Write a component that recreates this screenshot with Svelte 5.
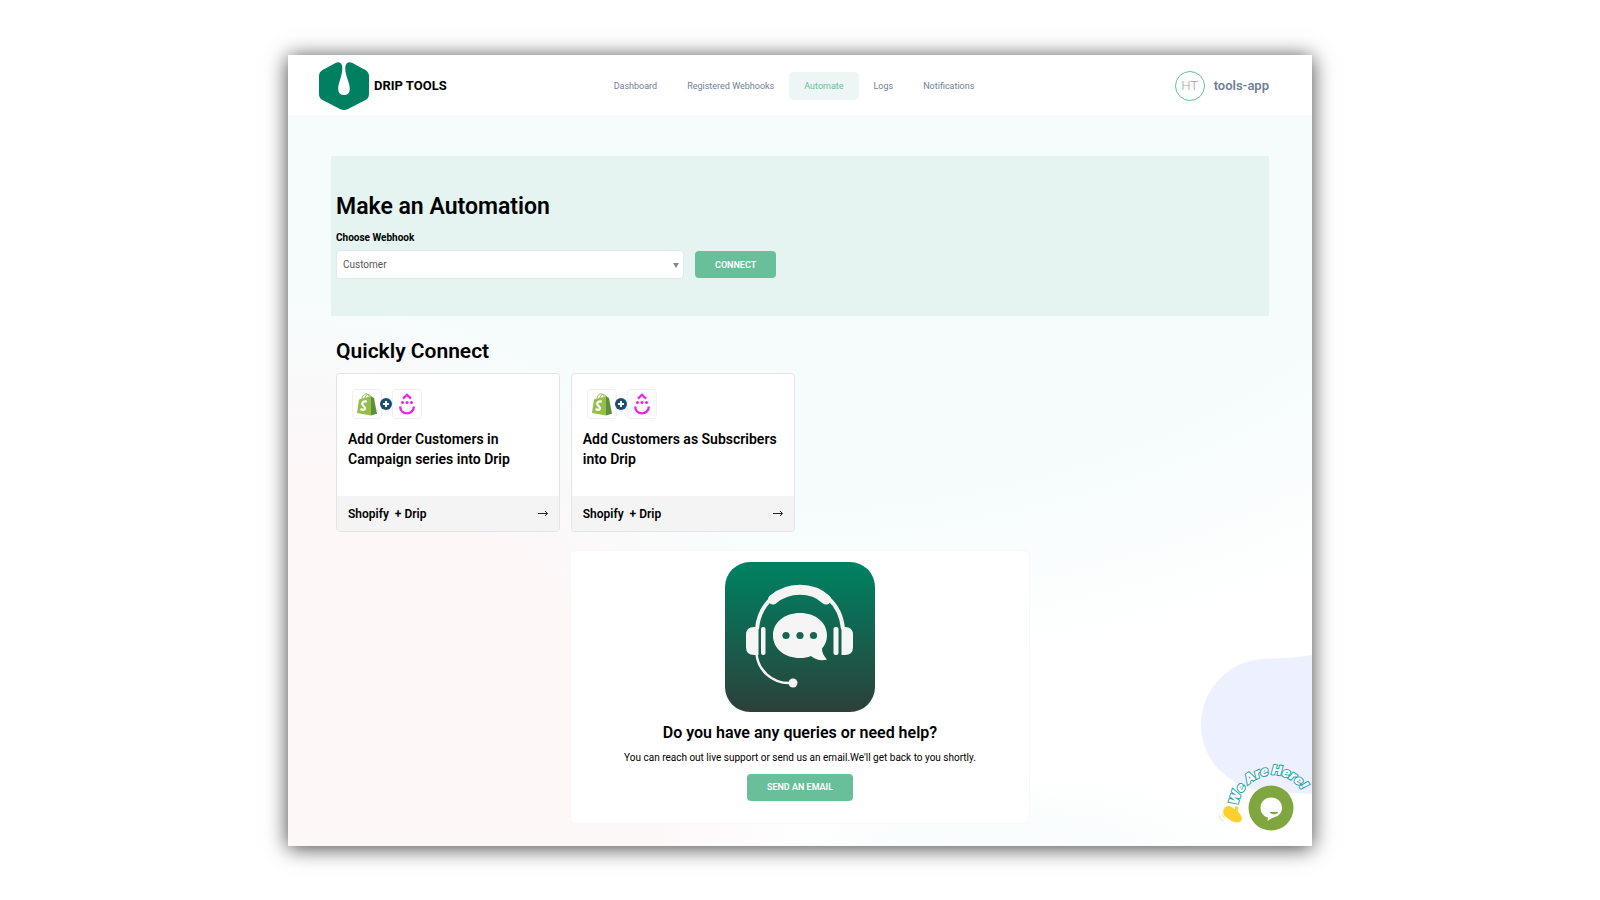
<script lang="ts">
	const links = ['Dashboard', 'Registered Webhooks', 'Automate', 'Logs', 'Notifications'];
	const active = 'Automate';

	const webhooks = ['Customer', 'Order', 'Checkout', 'Product'];
	let webhook = $state('Customer');

	const recipes = [
		{ title: 'Add Order Customers in Campaign series into Drip', from: 'Shopify', to: 'Drip' },
		{ title: 'Add Customers as Subscribers into Drip', from: 'Shopify', to: 'Drip' }
	];
</script>

<div class="window">
	<header>
		<a class="brand" href="#home">
			<svg width="50" height="48" viewBox="0 0 50 48" aria-hidden="true">
				<path
					fill="#008060"
					d="M16 1.2 Q19.5 -.8 22 1.6 Q23.4 3 23.3 6 C23.3 15 19.2 20 19.2 27 Q19.5 33 25 33 Q30.5 33 30.8 27 C30.8 20 26.4 15 26.2 6 Q26.2 3 27.6 1.4 Q30.2 -.8 33.5 1 L46 7.8 Q50 10 50 14 L50 32 Q50 36 46.5 38 L29 47 Q25 49 21 47 L3.5 38 Q0 36 0 32 L0 14 Q0 10 3.5 8 Z"
				/>
			</svg>
			<span>DRIP TOOLS</span>
		</a>

		<nav>
			{#each links as link}
				<a href="#{link.toLowerCase().replace(' ', '-')}" class:active={link === active}>{link}</a>
			{/each}
		</nav>

		<div class="account">
			<span class="avatar">HT</span>
			<span class="name">tools-app</span>
		</div>
	</header>

	<main>
		<section class="automation">
			<h1>Make an Automation</h1>
			<label for="webhook">Choose Webhook</label>
			<div class="row">
				<div class="select">
					<select id="webhook" bind:value={webhook}>
						{#each webhooks as option}
							<option>{option}</option>
						{/each}
					</select>
					<svg width="6" height="5" viewBox="0 0 6 5" aria-hidden="true">
						<path d="M0 0H6L3 5Z" fill="#888" />
					</svg>
				</div>
				<button class="btn">CONNECT</button>
			</div>
		</section>

		<section class="quick">
			<h2>Quickly Connect</h2>
			<div class="cards">
				{#each recipes as recipe}
					<a class="card" href="#connect">
						<div class="card-body">
							<div class="apps">
								<span class="app">
									<svg width="20" height="23" viewBox="0 0 20 23" aria-hidden="true">
										<path d="M5 6C5 2.5 7.5 .8 9.3 .8C11.5 .8 12.3 3 12.3 5.5M8 5.5C8 3 9.5 1.5 11 1.5C13 1.5 13.8 3 14 4.5" fill="none" stroke="#95bf47" stroke-width="1" />
										<path d="M2 6.5L14 3.2L14 22.5L0 20Z" fill="#95bf47" />
										<path d="M14 3.2L17 5L20 20.8L14 22.5Z" fill="#5e8e3e" />
										<path d="M9.8 8.8C7.3 7.6 4.9 9.2 5.2 11C5.5 13 8.3 13.3 8 15.4C7.7 17.5 5.3 17.3 3.6 15.9" fill="none" stroke="#fff" stroke-width="2.2" />
									</svg>
								</span>
								<svg class="plus" width="12" height="12" viewBox="0 0 12 12" aria-hidden="true">
									<circle cx="6" cy="6" r="6" fill="#1b4f72" />
									<path d="M6 3V9M3 6H9" stroke="#fff" stroke-width="2" />
								</svg>
								<span class="app">
									<svg width="16" height="22" viewBox="0 0 16 22" aria-hidden="true">
										<path d="M4 5.6L8 1.8L12 5.6" fill="none" stroke="#ee22ee" stroke-width="2.2" />
										<circle cx="3.5" cy="9.5" r="1.5" fill="#ee22ee" />
										<circle cx="8" cy="9.5" r="1.5" fill="#ee22ee" />
										<circle cx="12.5" cy="9.5" r="1.5" fill="#ee22ee" />
										<path d="M1.2 13.5C1.2 22.6 14.8 22.6 14.8 13.5" fill="none" stroke="#ee22ee" stroke-width="2.4" />
									</svg>
								</span>
							</div>
							<h3>{recipe.title}</h3>
						</div>
						<div class="card-foot">
							<span>{recipe.from} &nbsp;+ {recipe.to}</span>
							<svg width="10" height="8" viewBox="0 0 10 8" aria-hidden="true">
								<path d="M0 3.5H9.5M7 1L9.5 3.5L7 6" fill="none" stroke="#222" stroke-width="1" />
							</svg>
						</div>
					</a>
				{/each}
			</div>
		</section>

		<section class="help">
			<svg width="150" height="150" viewBox="0 0 150 150" aria-hidden="true">
				<defs>
					<linearGradient id="help-bg" x1="0" y1="0" x2="0" y2="1">
						<stop offset="0.05" stop-color="#008060" />
						<stop offset="1" stop-color="#2c403a" />
					</linearGradient>
				</defs>
				<rect width="150" height="150" rx="25" fill="url(#help-bg)" />
				<g fill="none" stroke="#f5f5f5" stroke-linecap="round">
					<path d="M32 67C33 55 38 44 47 36M118 67C117 55 112 44 103 36" stroke-width="4" stroke-linecap="butt" />
					<path d="M48 37.5C63 24.5 87 24.5 101 37.5" stroke-width="10" />
					<path d="M31.5 92C33 108 47 122 66 121" stroke-width="2.5" stroke-linecap="butt" />
				</g>
				<g fill="#f5f5f5">
					<path d="M33.5 65V93H29Q21 93 21 85V73Q21 65 29 65Z" />
					<path d="M116.5 65V93H120Q128 93 128 85V73Q128 65 120 65Z" />
					<rect x="36" y="65" width="4.5" height="28" rx="2" />
					<rect x="108.5" y="65" width="5" height="28" rx="2" />
					<circle cx="68" cy="121" r="4.5" />
					<path d="M75 51C90 51 102 60 102 73.5C102 79 100 83 97 86.5C97 91 99 94 102 97.5C96 99.5 90 97.5 86 94C82.5 95.5 79 96 75 96C60 96 48 87 48 73.5C48 60 60 51 75 51Z" />
				</g>
				<g fill="#17654f">
					<circle cx="61" cy="73.5" r="3.6" />
					<circle cx="75" cy="73.5" r="3.6" />
					<circle cx="88.5" cy="73.5" r="3.6" />
				</g>
			</svg>
			<h2>Do you have any queries or need help?</h2>
			<p>You can reach out live support or send us an email.We'll get back to you shortly.</p>
			<a class="btn" href="#email">SEND AN EMAIL</a>
		</section>
	</main>

	<svg class="blob" width="111" height="139" viewBox="0 0 111 139" aria-hidden="true">
		<path d="M111 0C96 3 78 3 60 4C26 7 0 36 0 70C0 108 32 137 75 137L111 139Z" fill="#edf1ff" />
	</svg>

	<button class="chat" aria-label="Open chat">
		<svg width="100" height="80" viewBox="0 0 100 80">
			<path id="arc" d="M24 52A35 35 0 1 1 88 75" fill="none" />
			<text class="greeting"><textPath href="#arc">We Are Here!</textPath></text>
			<path
				d="M9.5 58Q8.5 55.5 10.5 54.5Q10.5 52 13 52.5Q15 51 17 52.8L21 55.5L21 53Q22.5 51.3 24.3 53.3L24 57.5L27.3 62Q29 66 26 68Q22.5 69.3 17.5 67L10.5 62Q8.5 60 9.5 58Z"
				fill="#ffd02b"
			/>
			<path d="M5 61Q5.5 65 9.5 67M8 60.5Q8.5 63 11 64.5" fill="none" stroke="#ffdc80" stroke-width="1" />
			<circle cx="57" cy="54" r="22.5" fill="#80a640" />
			<path d="M57 43.5C63.5 43.5 68 48 68 54C68 60 63 63 58 64L53.5 67L54 63.5C49.5 62.5 46.5 58.5 46.5 54C46.5 48 51 43.5 57 43.5Z" fill="#fff" />
			<path d="M56 58.5Q60 61.5 64 58.5Z" fill="#80a640" stroke="#80a640" />
		</svg>
	</button>
</div>

<style>
	:global(body) {
		background: #fff;
		font-family: Roboto, 'Liberation Sans', sans-serif;
		color: #000;
	}

	:global(*) {
		box-sizing: border-box;
	}

	.window {
		position: relative;
		width: 64%;
		margin: 55px auto;
		overflow: hidden;
		background:
			radial-gradient(ellipse 26% 12% at 70% 102%, #f6fcfc, transparent),
			radial-gradient(ellipse 52% 70% at 0% 100%, #fdf7f8 68%, transparent),
			radial-gradient(ellipse 100% 80% at 45% 0%, #f6fcfc 72%, transparent),
			#fff;
		box-shadow: 0 2px 20px rgba(0, 0, 0, 0.75);
	}

	a {
		color: inherit;
		text-decoration: none;
	}

	h1,
	h2,
	h3,
	p {
		margin: 0;
	}

	h1,
	h2,
	h3 {
		font-weight: 600;
	}

	header {
		display: grid;
		grid-template-columns: 1fr auto 1fr;
		align-items: center;
		height: 62px;
		padding: 0 43px 0 31px;
		background: #fff;
		border-bottom: 1px solid #f3f5f5;
	}

	.brand {
		display: flex;
		align-items: center;
		gap: 5px;
		font-size: 13px;
		font-weight: 700;
	}

	nav {
		display: flex;
		font-size: 9px;
		color: #718096;
	}

	nav a {
		padding: 0 15px;
		line-height: 28px;
		border-radius: 5px;
	}

	nav a.active {
		background: #edf6f4;
		color: #68bf99;
	}

	.account {
		display: flex;
		align-items: center;
		justify-content: flex-end;
		gap: 9px;
	}

	.avatar {
		width: 30px;
		height: 30px;
		border: 1px solid #68bf99;
		border-radius: 50%;
		font-size: 13px;
		font-weight: 300;
		line-height: 28px;
		text-align: center;
		color: #68bf99;
	}

	.name {
		font-size: 13px;
		font-weight: 600;
		color: #718096;
	}

	main {
		padding: 39px 43px 22px;
	}

	.automation {
		height: 160px;
		padding: 36px 5px 0;
		background: rgba(75, 172, 136, 0.1);
	}

	h1 {
		font-size: 23px;
		line-height: 30px;
	}

	label {
		display: block;
		margin: 10px 0 6px;
		font-size: 10px;
		font-weight: 700;
		line-height: 12px;
	}

	.row {
		display: flex;
		align-items: center;
		gap: 11px;
	}

	.select {
		position: relative;
		width: 37.5%;
	}

	.select svg {
		position: absolute;
		right: 5px;
		top: 13px;
		pointer-events: none;
	}

	select {
		display: block;
		width: 100%;
		height: 29px;
		padding: 0 6px;
		appearance: none;
		border: 1px solid #e3e8e8;
		border-radius: 4px;
		background: #fff;
		font: 10px Roboto, sans-serif;
		color: #555;
	}

	.btn {
		display: inline-block;
		height: 27px;
		padding: 0 20px;
		border: 0;
		border-radius: 4px;
		background: #68bf99;
		color: #fff;
		font: 600 9px/26px Roboto, sans-serif;
	}

	.quick {
		padding: 20px 5px 0;
	}

	.quick h2 {
		font-size: 21px;
		line-height: 30px;
	}

	.cards {
		display: grid;
		grid-template-columns: repeat(4, 1fr);
		gap: 11px;
		margin-top: 7px;
	}

	.card {
		border: 1px solid #e2e5e5;
		border-radius: 4px;
		overflow: hidden;
		background: #fff;
	}

	.card-body {
		height: 122px;
		padding: 15px 11px 0;
	}

	.apps {
		display: flex;
		align-items: center;
		padding-left: 4px;
	}

	.app {
		display: grid;
		place-items: center;
		width: 30px;
		height: 30px;
		border: 1px solid #f0f0f0;
		border-radius: 4px;
	}

	.plus {
		z-index: 1;
		margin-left: -2px;
	}

	h3 {
		margin-top: 10px;
		font-size: 14px;
		line-height: 20px;
	}

	.card-foot {
		display: flex;
		align-items: center;
		justify-content: space-between;
		height: 35px;
		padding: 0 11px;
		background: #f4f4f4;
		font-size: 12px;
		font-weight: 600;
	}

	.help {
		display: flex;
		flex-direction: column;
		align-items: center;
		width: 49%;
		margin: 18px auto 0;
		padding: 11px 0 22px;
		border: 1px solid #f6f8f8;
		border-radius: 6px;
		background: #fff;
	}

	.help h2 {
		margin-top: 10px;
		font-size: 16px;
		line-height: 22px;
	}

	.help p {
		margin: 7px 0 10px;
		font-size: 10px;
		line-height: 13px;
	}

	.blob {
		position: absolute;
		right: 0;
		bottom: 52px;
	}

	.chat {
		position: absolute;
		right: -2px;
		bottom: 12px;
		padding: 0;
		border: 0;
		background: none;
		line-height: 0;
		cursor: pointer;
	}

	.greeting {
		font: italic 900 13px Inter, 'Open Sans', sans-serif;
		fill: #fff;
		stroke: #2a9fa8;
		stroke-width: 2px;
		paint-order: stroke;
	}
</style>
